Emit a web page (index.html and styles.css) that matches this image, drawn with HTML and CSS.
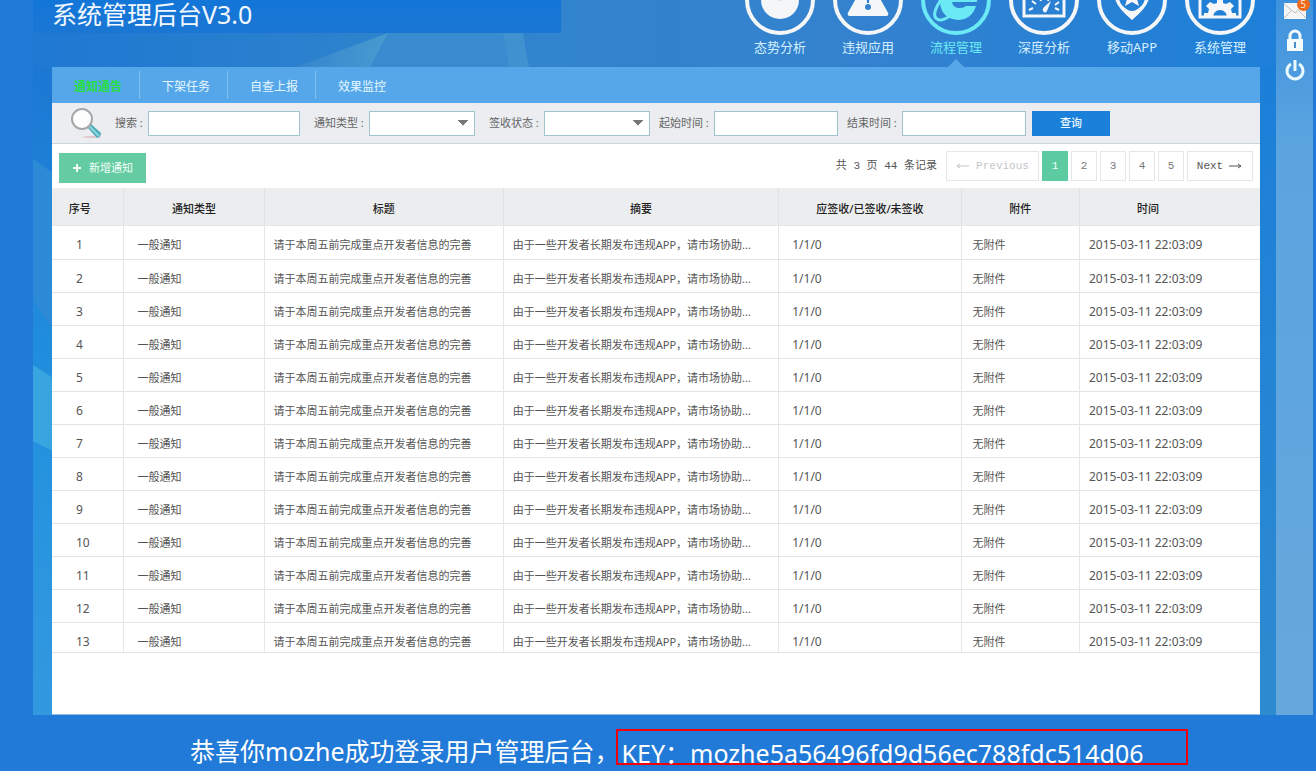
FILE: index.html
```html
<!DOCTYPE html>
<html lang="zh-CN">
<head>
<meta charset="utf-8">
<title>系统管理后台V3.0</title>
<link rel="stylesheet" href="styles.css">
</head>
<body>
<div class="stage">
  <svg class="backdrop" viewBox="0 0 1280 715" preserveAspectRatio="none" aria-hidden="true">
    <defs>
      <linearGradient id="sky" x1="0" y1="0" x2="1" y2="0"><stop offset="0" stop-color="#1f78d2"/><stop offset=".3" stop-color="#2f84cc"/><stop offset=".65" stop-color="#3482cf"/><stop offset="1" stop-color="#1b7fd9"/></linearGradient>
      <linearGradient id="side" x1="0" y1="0" x2="0" y2="1"><stop offset="0" stop-color="#1c78d3"/><stop offset=".5" stop-color="#2190de"/><stop offset="1" stop-color="#3399df"/></linearGradient>
      <linearGradient id="edge" x1="0" y1="0" x2="0" y2="1"><stop offset="0" stop-color="#1b7fd9"/><stop offset="1" stop-color="#2f8bd0"/></linearGradient>
      <linearGradient id="beam" x1="0" y1="0" x2="1" y2="0"><stop offset="0" stop-color="#3484cd"/><stop offset="1" stop-color="#479bd0"/></linearGradient>
    </defs>
    <rect width="1280" height="68" fill="url(#sky)"/>
    <path d="M260 68L355 33L337 68z" fill="url(#beam)"/>
    <path d="M355 33H490L496 68H337z" fill="#388bcf"/>
    <path d="M470 33H490L496 68H476z" fill="#3f91d0"/>
    <rect y="67" width="20" height="648" fill="url(#side)"/>
    <path d="M0 159L20 173V330L0 300z" fill="#2c8ad6"/>
    <path d="M0 365L20 378V451L0 441z" fill="#38a5e0"/>
    <rect x="1226" y="67" width="54" height="648" fill="url(#edge)"/>
  </svg>
  <div class="main">
    <header class="header">
      <h1 class="brand">系统管理后台V3.0</h1>
      <nav class="modules" aria-label="主导航">
        <a class="module" href="#situation">
          <svg class="module-icon" viewBox="0 0 70 70" aria-hidden="true"><circle cx="35" cy="35" r="33" class="ring"/><circle cx="35" cy="35" r="19" fill="currentColor"/><path d="M35 35V16A19 19 0 0 1 51 26z" fill="#3482cf"/><path d="M29 32Q35 40 41 32z" fill="#d8e3ee"/></svg>
          <span>态势分析</span></a>
        <a class="module" href="#violations">
          <svg class="module-icon" viewBox="0 0 70 70" aria-hidden="true"><circle cx="35" cy="35" r="33" class="ring"/><path d="M35 14L54 48Q55 50 53 50H17Q15 50 16 48z" fill="currentColor" stroke="currentColor" stroke-linejoin="round" stroke-width="2"/><path d="M33 23H37L36 38H34z" fill="#3482cf"/><circle cx="35" cy="42" r="3" fill="#3482cf"/></svg>
          <span>违规应用</span></a>
        <a class="module active" href="#process" aria-current="page">
          <svg class="module-icon" viewBox="0 0 70 70" aria-hidden="true"><circle cx="35" cy="35" r="33" class="ring"/><path d="M56 37H31Q32 43 39 43Q43 43 45 41H55Q51 54 38 55Q20 54 19 37Q20 19 37 18Q56 19 56 37zM31 31H46Q45 25 38 25Q32 25 31 31z" fill="currentColor"/><path d="M27 25Q8 49 16 54Q20 57 29 51" fill="none" stroke="currentColor" stroke-width="3"/></svg>
          <span>流程管理</span></a>
        <a class="module" href="#depth">
          <svg class="module-icon" viewBox="0 0 70 70" aria-hidden="true"><circle cx="35" cy="35" r="33" class="ring"/><path d="M15 20H55V51H15z" fill="none" stroke="currentColor" stroke-width="3"/><path d="M20 45L24 43M23 36L27 39M30 31L32 36M41 31L39 36M50 37L46 40M50 45L46 43" stroke="currentColor" stroke-width="2"/><path d="M42 36L38 46Q36 49 34 46Q33 44 35 42z" fill="currentColor"/></svg>
          <span>深度分析</span></a>
        <a class="module" href="#mobile">
          <svg class="module-icon" viewBox="0 0 70 70" aria-hidden="true"><circle cx="35" cy="35" r="33" class="ring"/><path d="M35 15Q52 15 52 32Q52 41 35 55Q18 41 18 32Q18 15 35 15zM35 19Q22 20 22 32Q22 40 31 45Q35 47 39 45Q48 40 48 32Q48 20 35 19z" fill="currentColor" fill-rule="evenodd"/><path d="M35 20L38 29H46L40 34L42 41L35 37L28 41L30 34L24 29H32z" fill="currentColor"/></svg>
          <span>移动APP</span></a>
        <a class="module" href="#system">
          <svg class="module-icon" viewBox="0 0 70 70" aria-hidden="true"><circle cx="35" cy="35" r="33" class="ring"/><path d="M15 20H55V52H15z" fill="none" stroke="currentColor" stroke-width="3"/><path d="M19 52V48H23L24 44L21 41L25 37L29 39L32 38V34H38V38L41 39L45 37L49 41L46 44L47 48H51V52H42A7 7 0 0 0 28 52z" fill="currentColor"/></svg>
          <span>系统管理</span></a>
      </nav>
    </header>

    <main class="panel">
      <nav class="tabs" aria-label="流程管理">
        <a class="tab current" href="#notice" aria-current="page">通知通告</a>
        <a class="tab" href="#offline">下架任务</a>
        <a class="tab" href="#report">自查上报</a>
        <a class="tab" href="#monitor">效果监控</a>
      </nav>

      <form class="search">
        <svg class="glass" viewBox="0 0 32 32" aria-hidden="true"><ellipse cx="22" cy="30" rx="9" ry="1" fill="#e5c6c8"/><path d="M17 20L21 17L31 26Q31 30 27 31z" fill="#4fadb9"/><path d="M19 19L29 29" stroke="#8ed7dc" stroke-width="2"/><circle cx="12" cy="12" r="10" fill="#fdfdfe" stroke="#a5a7a9" stroke-width="2"/></svg>
        <div class="filters">
          <div class="field"><label class="short" for="keyword">搜索 :</label><input id="keyword" class="keyword" type="text"></div>
          <div class="field"><label for="type">通知类型 :</label><select id="type"><option></option></select></div>
          <div class="field"><label for="state">签收状态 :</label><select id="state"><option></option></select></div>
        </div>
        <div class="dates">
          <div class="field"><label for="start">起始时间 :</label><input id="start" type="text"></div>
          <div class="field"><label for="end">结束时间 :</label><input id="end" type="text"></div>
        </div>
        <button class="query" type="submit">查询</button>
      </form>

      <div class="toolbar">
        <button class="add" type="button"><svg viewBox="0 0 10 10" aria-hidden="true"><path d="M5 1V9M1 5H9" stroke="currentColor" stroke-width="2"/></svg>新增通知</button>
        <div class="pager">
          <span class="total">共 3 页 44 条记录</span>
          <button class="page wide" type="button" disabled><svg viewBox="0 0 14 8" aria-hidden="true"><path d="M1 4H13M4 2L1 4L4 6" fill="none" stroke="currentColor"/></svg>Previous</button>
          <button class="page on" type="button" aria-current="page">1</button>
          <button class="page" type="button">2</button>
          <button class="page" type="button">3</button>
          <button class="page" type="button">4</button>
          <button class="page" type="button">5</button>
          <button class="page next" type="button">Next<svg viewBox="0 0 14 8" aria-hidden="true"><path d="M0 4H12M9 2L12 4L9 6" fill="none" stroke="currentColor"/></svg></button>
        </div>
      </div>

      <table class="notices">
        <colgroup><col class="c-no"><col class="c-type"><col class="c-title"><col class="c-brief"><col class="c-sign"><col class="c-file"><col class="c-time"></colgroup>
        <thead><tr><th>序号</th><th>通知类型</th><th>标题</th><th>摘要</th><th>应签收/已签收/未签收</th><th>附件</th><th>时间</th></tr></thead>
        <tbody>
          <tr><td>1</td><td>一般通知</td><td>请于本周五前完成重点开发者信息的完善</td><td>由于一些开发者长期发布违规APP，请市场协助...</td><td>1/1/0</td><td>无附件</td><td>2015-03-11 22:03:09</td></tr>
          <tr><td>2</td><td>一般通知</td><td>请于本周五前完成重点开发者信息的完善</td><td>由于一些开发者长期发布违规APP，请市场协助...</td><td>1/1/0</td><td>无附件</td><td>2015-03-11 22:03:09</td></tr>
          <tr><td>3</td><td>一般通知</td><td>请于本周五前完成重点开发者信息的完善</td><td>由于一些开发者长期发布违规APP，请市场协助...</td><td>1/1/0</td><td>无附件</td><td>2015-03-11 22:03:09</td></tr>
          <tr><td>4</td><td>一般通知</td><td>请于本周五前完成重点开发者信息的完善</td><td>由于一些开发者长期发布违规APP，请市场协助...</td><td>1/1/0</td><td>无附件</td><td>2015-03-11 22:03:09</td></tr>
          <tr><td>5</td><td>一般通知</td><td>请于本周五前完成重点开发者信息的完善</td><td>由于一些开发者长期发布违规APP，请市场协助...</td><td>1/1/0</td><td>无附件</td><td>2015-03-11 22:03:09</td></tr>
          <tr><td>6</td><td>一般通知</td><td>请于本周五前完成重点开发者信息的完善</td><td>由于一些开发者长期发布违规APP，请市场协助...</td><td>1/1/0</td><td>无附件</td><td>2015-03-11 22:03:09</td></tr>
          <tr><td>7</td><td>一般通知</td><td>请于本周五前完成重点开发者信息的完善</td><td>由于一些开发者长期发布违规APP，请市场协助...</td><td>1/1/0</td><td>无附件</td><td>2015-03-11 22:03:09</td></tr>
          <tr><td>8</td><td>一般通知</td><td>请于本周五前完成重点开发者信息的完善</td><td>由于一些开发者长期发布违规APP，请市场协助...</td><td>1/1/0</td><td>无附件</td><td>2015-03-11 22:03:09</td></tr>
          <tr><td>9</td><td>一般通知</td><td>请于本周五前完成重点开发者信息的完善</td><td>由于一些开发者长期发布违规APP，请市场协助...</td><td>1/1/0</td><td>无附件</td><td>2015-03-11 22:03:09</td></tr>
          <tr><td>10</td><td>一般通知</td><td>请于本周五前完成重点开发者信息的完善</td><td>由于一些开发者长期发布违规APP，请市场协助...</td><td>1/1/0</td><td>无附件</td><td>2015-03-11 22:03:09</td></tr>
          <tr><td>11</td><td>一般通知</td><td>请于本周五前完成重点开发者信息的完善</td><td>由于一些开发者长期发布违规APP，请市场协助...</td><td>1/1/0</td><td>无附件</td><td>2015-03-11 22:03:09</td></tr>
          <tr><td>12</td><td>一般通知</td><td>请于本周五前完成重点开发者信息的完善</td><td>由于一些开发者长期发布违规APP，请市场协助...</td><td>1/1/0</td><td>无附件</td><td>2015-03-11 22:03:09</td></tr>
          <tr><td>13</td><td>一般通知</td><td>请于本周五前完成重点开发者信息的完善</td><td>由于一些开发者长期发布违规APP，请市场协助...</td><td>1/1/0</td><td>无附件</td><td>2015-03-11 22:03:09</td></tr>
        </tbody>
      </table>
    </main>
  </div>

  <aside class="rail">
    <button class="tool" type="button" aria-label="消息"><svg viewBox="0 0 24 20" aria-hidden="true"><path d="M1 2H23V18H1z" fill="#f5f5f5"/><path d="M1 3L12 12L23 3M1 17L8 10M23 17L16 10" fill="none" stroke="#b9bfc5" stroke-width="1"/></svg><span class="badge">5</span></button>
    <button class="tool" type="button" aria-label="锁定"><svg viewBox="0 0 24 24" aria-hidden="true"><path d="M7 12V8A5 5 0 0 1 17 8V12" fill="none" stroke="#f4fbff" stroke-width="3"/><path d="M4 11H20V23H4z" fill="#f4fbff"/><path d="M11 14H13V20H11z" fill="#4a90d0"/></svg></button>
    <button class="tool" type="button" aria-label="退出"><svg viewBox="0 0 24 24" aria-hidden="true"><path d="M8 6A8 8 0 1 0 16 6M12 2V13" fill="none" stroke="#eafaff" stroke-width="3"/></svg></button>
  </aside>
</div>
<footer class="message">恭喜你mozhe成功登录用户管理后台，<strong class="key">KEY：mozhe5a56496fd9d56ec788fdc514d06</strong></footer>
</body>
</html>
```
FILE: styles.css
```css
* { box-sizing: border-box; }

body {
  margin: 0;
  min-height: 100vh;
  display: flex;
  flex-direction: column;
  background: #217ad7;
  color: #555;
  font: 11px/18px "Noto Sans", "Noto Sans CJK SC", sans-serif;
}

button, input, select { font: inherit; margin: 0; border-radius: 0; }
a { color: inherit; text-decoration: none; }

.stage {
  position: relative;
  flex: 1;
  display: flex;
  margin: 0 3px 0 33px;
}
.backdrop { position: absolute; inset: 0; width: 100%; height: 100%; z-index: -1; }
.main { flex: 1; min-width: 0; display: flex; flex-direction: column; }

/* header */
.header { display: flex; justify-content: space-between; height: 67px; padding-right: 12px; }
.brand {
  width: 528px;
  height: 33px;
  margin: 0;
  padding-left: 19px;
  background: linear-gradient(#1276d8, #1b76d3);
  color: #f2f8ff;
  font-size: 25px;
  font-weight: 400;
  line-height: 28px;
}
.modules { display: flex; }
.module {
  position: relative;
  width: 88px;
  display: flex;
  flex-direction: column;
  align-items: center;
  color: #f4f6f8;
  font-size: 13px;
}
.module-icon { width: 70px; height: 70px; margin: -35px 0 3px; flex: none; }
.ring { fill: none; stroke: currentColor; stroke-width: 4; }
.module span { color: #d3efff; }
.module.active, .module.active span { color: #6be9f4; }
.module.active::after {
  content: "";
  position: absolute;
  bottom: 0;
  border: 8px solid transparent;
  border-top: 0;
  border-bottom-color: #55a7ea;
}

/* panel */
.panel { flex: 1; margin: 0 16px 0 19px; background: #fff; border-bottom: 1px solid #91bce8; }
.tabs {
  display: flex;
  align-items: center;
  height: 36px;
  background: #55a7ea;
  color: #e6f7ff;
  font-size: 12px;
}
.tab { padding: 3px 17px 0 22px; line-height: 25px; border-right: 1px solid #83c0f1; }
.tab:last-child { border-right: 0; }
.tab.current { color: #25df3d; font-weight: 700; }

.search {
  display: flex;
  align-items: center;
  height: 41px;
  padding-left: 18px;
  background: #ebedf1;
  border-bottom: 1px solid #c9d6de;
}
.glass { width: 32px; height: 32px; margin-right: 13px; }
.filters { display: flex; gap: 14px; margin-right: 9px; }
.dates { display: flex; gap: 9px; margin-right: 6px; }
.field { display: flex; align-items: center; }
.field label { width: 55px; color: #666; white-space: nowrap; }
.field .short { width: 33px; }
.field input, .field select {
  width: 124px;
  height: 25px;
  padding: 0 6px;
  border: 1px solid #9fc3cf;
  background-color: #fff;
}
.field .keyword { width: 152px; }
.field select {
  width: 106px;
  appearance: none;
  background-image: linear-gradient(to bottom right, #777 50%, transparent 51%), linear-gradient(to bottom left, #777 50%, transparent 51%);
  background-size: 5px 6px;
  background-position: right 6px center, right 11px center;
  background-repeat: no-repeat;
}
.query { width: 78px; height: 25px; padding: 0; border: 0; background: #1b80da; color: #e8f7ff; font-weight: 500; }

.toolbar { display: flex; align-items: center; justify-content: space-between; height: 44px; padding: 0 7px; }
.add {
  display: flex;
  align-items: center;
  justify-content: center;
  gap: 7px;
  width: 87px;
  height: 30px;
  margin-top: 4px;
  padding: 0;
  border: 0;
  background: #65cba2;
  color: #f3fff9;
}
.add svg { width: 10px; height: 10px; }
.pager { display: flex; align-items: center; gap: 3px; font-family: "Liberation Mono", "Noto Sans CJK SC", monospace; }
.total { margin-right: 6px; white-space: nowrap; }
.page {
  display: flex;
  align-items: center;
  justify-content: center;
  gap: 6px;
  width: 26px;
  height: 30px;
  padding: 0;
  border: 1px solid #e4e6e9;
  background: #fff;
  color: #777;
}
.page svg { width: 14px; height: 8px; }
.page.on { background: #5ccba2; border-color: #5ccba2; color: #f3fff9; }
.page.wide { width: 93px; color: #c3c6c9; }
.page.next { width: 66px; color: #555; }

/* table */
.notices { width: 100%; table-layout: fixed; border-collapse: separate; border-spacing: 0; border-bottom: 1px solid #e4e4e4; }
.c-no { width: 6%; }
.c-type { width: 11.6%; }
.c-title { width: 19.8%; }
.c-brief { width: 22.8%; }
.c-sign { width: 15.1%; }
.c-file { width: 9.8%; }
.c-time { width: 14.9%; }
.notices th {
  height: 38px;
  padding: 4px 0 0;
  background: #ecedef;
  border-right: 1px solid #e1e2e4;
  border-bottom: 1px solid #e6e6e6;
  color: #222;
  font-weight: 500;
}
.notices th:first-child { padding-right: 16px; }
.notices th:last-child { padding-right: 44px; }
.notices td {
  height: 33px;
  padding: 10px 0 0;
  vertical-align: top;
  border-right: 1px solid #e6e6e6;
  border-bottom: 1px solid #e4e4e4;
  white-space: nowrap;
}
.notices th:last-child, .notices td:last-child { border-right: 0; }
.notices tbody tr:first-child td { height: 34px; }
.notices tbody tr:last-child td { height: 29px; border-bottom: 0; }
.notices td:nth-child(1) { padding-left: 24px; font-size: 12px; }
.notices td:nth-child(2) { padding-left: 13px; }
.notices td:nth-child(3) { padding-left: 9px; }
.notices td:nth-child(4) { padding-left: 9px; }
.notices td:nth-child(5) { padding-left: 13px; font-size: 12px; }
.notices td:nth-child(6) { padding-left: 11px; }
.notices td:nth-child(7) { padding-left: 9px; font-size: 12px; }

/* right rail */
.rail {
  width: 37px;
  display: flex;
  flex-direction: column;
  align-items: center;
  gap: 6px;
  background: linear-gradient(#3e92dd, #5ba4e0 20%, #66a8dc);
}
.tool { position: relative; width: 24px; height: 24px; padding: 0; border: 0; background: none; }
.tool svg { display: block; width: 24px; }
.tool:first-child { height: 22px; }
.badge {
  position: absolute;
  top: -2px;
  right: -3px;
  width: 13px;
  height: 13px;
  border-radius: 7px;
  background: #ef6a1c;
  color: #ffe4c8;
  font-size: 10px;
  line-height: 13px;
}

/* result message */
.message {
  display: flex;
  height: 56px;
  padding: 14px 16px 0 190px;
  color: #fff;
  font-size: 25px;
  line-height: 44px;
  white-space: nowrap;
}
.key {
  height: 36px;
  margin-left: -4px;
  padding: 0 42px 0 4px;
  border: 2px solid #f00008;
  font-weight: 400;
}
```
